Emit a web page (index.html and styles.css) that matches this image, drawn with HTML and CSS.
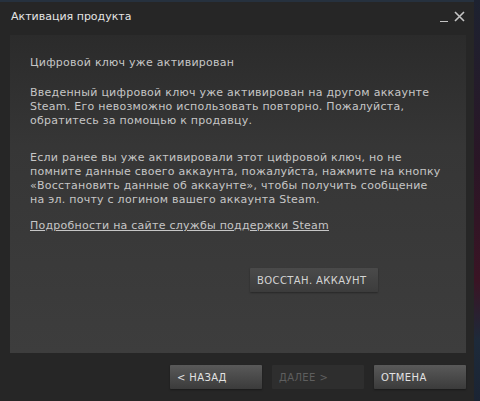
FILE: index.html
```html
<!DOCTYPE html>
<html lang="ru">
<head>
<meta charset="utf-8">
<title>Активация продукта</title>
<link rel="stylesheet" href="styles.css">
</head>
<body>
<div class="desktop">
  <div class="window">
    <div class="titlebar">
      <span class="title">Активация продукта</span>
      <div class="controls">
        <span class="minimize"></span>
        <svg class="close" width="11" height="11" viewBox="0 0 11 11">
          <path d="M1 1 L10 10 M10 1 L1 10" stroke="#c4c4c4" stroke-width="1.6" fill="none"/>
        </svg>
      </div>
    </div>
    <div class="panel">
      <p class="heading">Цифровой ключ уже активирован</p>
      <p class="para first">Введенный цифровой ключ уже активирован на другом аккаунте Steam. Его невозможно использовать повторно. Пожалуйста, обратитесь за помощью к продавцу.</p>
      <p class="para second">Если ранее вы уже активировали этот цифровой ключ, но не помните данные своего аккаунта, пожалуйста, нажмите на кнопку «Восстановить данные об аккаунте», чтобы получить сообщение на&nbsp;эл. почту с логином вашего аккаунта Steam.</p>
      <p class="para"><a class="link" href="#">Подробности на сайте службы поддержки Steam</a></p>
      <div class="recover-row">
        <button class="btn recover">ВОССТАН. АККАУНТ</button>
      </div>
    </div>
    <div class="footer">
      <button class="btn nav">&lt; НАЗАД</button>
      <button class="btn nav disabled">ДАЛЕЕ &gt;</button>
      <button class="btn nav">ОТМЕНА</button>
    </div>
  </div>
  <div class="edge"></div>
</div>
</body>
</html>
```

FILE: styles.css
```css
html, body {
  margin: 0;
  padding: 0;
  width: 480px;
  height: 401px;
  overflow: hidden;
  background: #1b2433;
  font-family: "DejaVu Sans", "Liberation Sans", sans-serif;
}

.desktop {
  display: flex;
  height: 401px;
}

.window {
  width: 474px;
  height: 399px;
  background: #262626;
  border-top: 2px solid #26313e;
  display: flex;
  flex-direction: column;
}

.edge {
  flex: 1;
  background: linear-gradient(180deg, #1d2230 0%, #2a1626 40%, #3a1424 70%, #1d2a3a 85%, #1b2433 100%);
}

.titlebar {
  height: 33px;
  display: flex;
  align-items: flex-start;
  justify-content: space-between;
  padding: 0 9px 0 11px;
}

.title {
  margin-top: 8px;
  font-size: 11px;
  color: #e4e4e4;
}

.controls {
  display: flex;
  align-items: flex-end;
  gap: 6px;
  margin-top: 9px;
}

.minimize {
  width: 8px;
  height: 1px;
  background: #c4c4c4;
}

.close {
  display: block;
}

.panel {
  margin: 0 8px 0 10px;
  height: 318px;
  background: linear-gradient(180deg, #2b2b2b 0%, #363636 35%, #3d3d3d 100%);
  padding: 21px 20px 0 20px;
  box-sizing: border-box;
  color: #c6c6c6;
  font-size: 11px;
  line-height: 14px;
  letter-spacing: 0.25px;
}

.panel p {
  margin: 0;
}

.panel .heading {
  margin-bottom: 16px;
}

.panel .first {
  margin-bottom: 23px;
}

.panel .second {
  margin-bottom: 12px;
}

.link {
  color: #c6c6c6;
  text-decoration: underline;
}

.recover-row {
  padding-left: 220px;
  margin-top: 35px;
}

.btn {
  font-family: "DejaVu Sans", "Liberation Sans", sans-serif;
  font-size: 10px;
  letter-spacing: 0.4px;
  color: #d4d4d4;
  border: none;
  border-radius: 1px;
  height: 24px;
  text-align: left;
  padding: 0 7px;
  background: linear-gradient(180deg, #4a4a4a 0%, #3c3c3c 100%);
  box-shadow: 0 1px 2px rgba(0, 0, 0, 0.35);
}

.recover {
  width: 128px;
}

.footer {
  display: flex;
  justify-content: flex-end;
  gap: 10px;
  padding: 12px 8px 0 0;
}

.nav {
  width: 92px;
  background: linear-gradient(180deg, #595959 0%, #3b3b3b 100%);
  color: #e2e2e2;
}

.nav.disabled {
  background: #2e2e2e;
  color: #5e5e5e;
  box-shadow: none;
}
```
